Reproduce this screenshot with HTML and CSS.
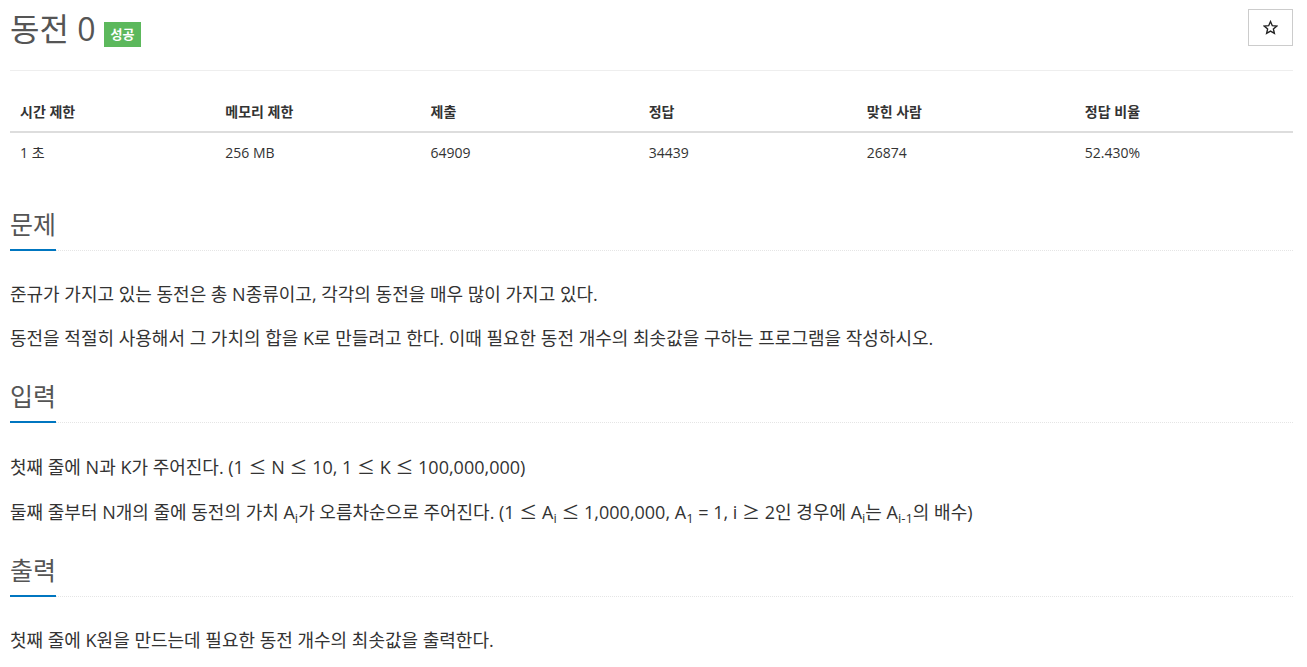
FILE: index.html
```html
<!DOCTYPE html>
<html lang="ko">
<head>
<meta charset="utf-8">
<link rel="stylesheet" href="styles.css">
</head>
<body>
<div class="page">
  <div class="title-row">
    <h1 class="title"><span>동전 0</span><span class="badge">성공</span></h1>
    <button class="star" type="button" aria-label="즐겨찾기"><svg width="15" height="15" viewBox="0 0 24 24"><path d="M12 2.5l2.9 6.6 7.1.6-5.4 4.7 1.6 7-6.2-3.7-6.2 3.7 1.6-7L2 9.7l7.1-.6z" fill="none" stroke="#222" stroke-width="2.2" stroke-linejoin="miter"/></svg></button>
  </div>
  <table class="info">
    <thead>
      <tr><th class="w16">시간 제한</th><th class="w16">메모리 제한</th><th class="w17">제출</th><th class="w17">정답</th><th class="w17">맞힌 사람</th><th class="w17">정답 비율</th></tr>
    </thead>
    <tbody>
      <tr><td>1 초</td><td>256 MB</td><td>64909</td><td>34439</td><td>26874</td><td>52.430%</td></tr>
    </tbody>
  </table>

  <section class="sec">
    <div class="headline"><h2>문제</h2></div>
    <p>준규가 가지고 있는 동전은 총 N종류이고, 각각의 동전을 매우 많이 가지고 있다.</p>
    <p>동전을 적절히 사용해서 그 가치의 합을 K로 만들려고 한다. 이때 필요한 동전 개수의 최솟값을 구하는 프로그램을 작성하시오.</p>
  </section>
  <section class="sec">
    <div class="headline"><h2>입력</h2></div>
    <p>첫째 줄에 N과 K가 주어진다. (1 <span class="op">≤</span> N <span class="op">≤</span> 10, 1 <span class="op">≤</span> K <span class="op">≤</span> 100,000,000)</p>
    <p>둘째 줄부터 N개의 줄에 동전의 가치 A<sub>i</sub>가 오름차순으로 주어진다. (1 <span class="op">≤</span> A<sub>i</sub> <span class="op">≤</span> 1,000,000, A<sub>1</sub> = 1, i <span class="op">≥</span> 2인 경우에 A<sub>i</sub>는 A<sub>i-1</sub>의 배수)</p>
  </section>
  <section class="sec">
    <div class="headline"><h2>출력</h2></div>
    <p>첫째 줄에 K원을 만드는데 필요한 동전 개수의 최솟값을 출력한다.</p>
  </section>
</div>
</body>
</html>
```

FILE: styles.css
```css
html, body {
  margin: 0;
  padding: 0;
  background: #fff;
}
body {
  font-family: "Open Sans", "Noto Sans CJK KR", sans-serif;
  color: #333;
  font-size: 14px;
}
.page {
  width: 1283px;
  margin-left: 10px;
}
.title-row {
  display: flex;
  justify-content: space-between;
  align-items: flex-start;
  border-bottom: 1px solid #eee;
  height: 71px;
  box-sizing: border-box;
}
.title {
  margin: 0;
  padding-top: 6px;
  font-size: 32px;
  font-weight: 400;
  line-height: 46px;
  color: #555;
  display: flex;
  align-items: center;
}
.badge {
  display: inline-block;
  background: #5cb85c;
  color: #fff;
  font-size: 13px;
  font-weight: 700;
  line-height: 25px;
  height: 25px;
  padding: 0 7px;
  margin-left: 8px;
  margin-top: 10px;
}
.star {
  margin-top: 9px;
  width: 45px;
  height: 37px;
  border: 1px solid #ccc;
  background: #fff;
  padding: 0;
  display: flex;
  align-items: center;
  justify-content: center;
}
.info {
  width: 100%;
  border-collapse: collapse;
  margin-top: 23px;
}
.info th, .info td {
  text-align: left;
  padding: 8px 10px;
  line-height: 20px;
  font-size: 14px;
}
.info th {
  font-weight: 700;
  border-bottom: 2px solid #ddd;
  padding-bottom: 9px;
}
.info td {
  padding-top: 10px;
}
.w16 { width: 16%; }
.w17 { width: 17%; }
.sec {
  margin-top: 30px;
}
.info + .sec {
  margin-top: 38px;
}
.headline {
  border-bottom: 1px dotted #e5e5e5;
  margin-bottom: 30px;
}
.headline h2 {
  display: inline-block;
  margin: 0 0 -1px 0;
  font-size: 25px;
  font-weight: 400;
  line-height: 30px;
  color: #555;
  padding-bottom: 10px;
  border-bottom: 2px solid #0076c0;
}
.sec p {
  margin: 0 0 18px 0;
  font-size: 18px;
  line-height: 26px;
}
.sec p:last-child {
  margin-bottom: 0;
}
.op {
  font-family: "Noto Sans CJK KR", sans-serif;
}
sub {
  font-size: 13px;
  line-height: 0;
  vertical-align: -4px;
}
```
